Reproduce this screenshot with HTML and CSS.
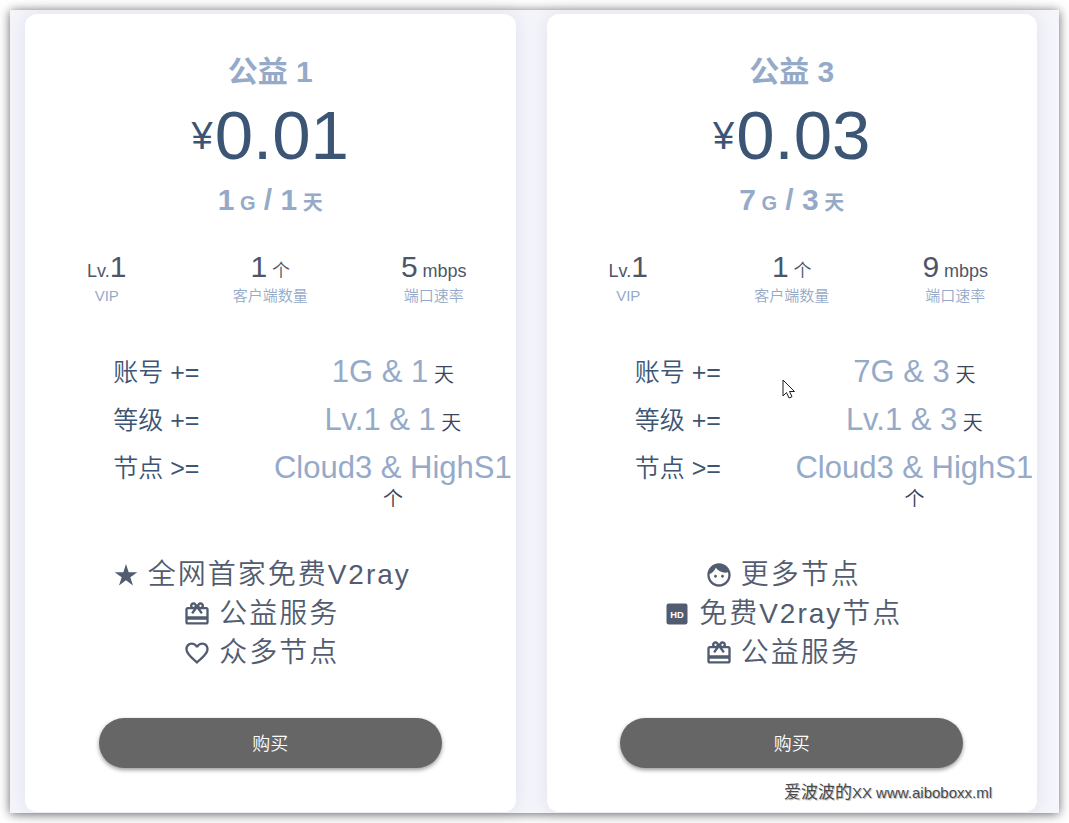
FILE: index.html
```html
<!DOCTYPE html>
<html lang="zh-CN">
<head>
<meta charset="utf-8">
<meta name="viewport" content="width=device-width, initial-scale=1">
<title>套餐</title>
<link rel="stylesheet" href="styles.css">
</head>
<body>
<main class="window">
  <section class="card">
    <h2 class="name">公益 1</h2>
    <p class="price"><span class="currency">¥</span>0.01</p>
    <p class="quota">1<small> G</small> / 1<small> 天</small></p>
    <dl class="stats">
      <div class="stat"><dd><small>Lv.</small>1</dd><dt>VIP</dt></div>
      <div class="stat"><dd>1<small> 个</small></dd><dt>客户端数量</dt></div>
      <div class="stat"><dd>5<small> mbps</small></dd><dt>端口速率</dt></div>
    </dl>
    <dl class="terms">
      <div class="term"><dt>账号 +=</dt><dd>1G &amp; 1<small> 天</small></dd></div>
      <div class="term"><dt>等级 +=</dt><dd>Lv.1 &amp; 1<small> 天</small></dd></div>
      <div class="term"><dt>节点 &gt;=</dt><dd>Cloud3 &amp; HighS1<small> 个</small></dd></div>
    </dl>
    <ul class="features">
      <li><svg class="icon" aria-hidden="true"><use href="#star"/></svg>全网首家免费V2ray</li>
      <li><svg class="icon" aria-hidden="true"><use href="#gift"/></svg>公益服务</li>
      <li><svg class="icon" aria-hidden="true"><use href="#heart"/></svg>众多节点</li>
    </ul>
    <button class="buy" type="button">购买</button>
  </section>
  <section class="card">
    <h2 class="name">公益 3</h2>
    <p class="price"><span class="currency">¥</span>0.03</p>
    <p class="quota">7<small> G</small> / 3<small> 天</small></p>
    <dl class="stats">
      <div class="stat"><dd><small>Lv.</small>1</dd><dt>VIP</dt></div>
      <div class="stat"><dd>1<small> 个</small></dd><dt>客户端数量</dt></div>
      <div class="stat"><dd>9<small> mbps</small></dd><dt>端口速率</dt></div>
    </dl>
    <dl class="terms">
      <div class="term"><dt>账号 +=</dt><dd>7G &amp; 3<small> 天</small></dd></div>
      <div class="term"><dt>等级 +=</dt><dd>Lv.1 &amp; 3<small> 天</small></dd></div>
      <div class="term"><dt>节点 &gt;=</dt><dd>Cloud3 &amp; HighS1<small> 个</small></dd></div>
    </dl>
    <ul class="features">
      <li><svg class="icon" aria-hidden="true"><use href="#face"/></svg>更多节点</li>
      <li><svg class="icon" viewBox="0 0 24 24" aria-hidden="true"><rect x="3" y="3" width="18" height="18" rx="2"/><text class="hd-text" x="12" y="15" text-anchor="middle">HD</text></svg>免费V2ray节点</li>
      <li><svg class="icon" aria-hidden="true"><use href="#gift"/></svg>公益服务</li>
    </ul>
    <button class="buy" type="button">购买</button>
  </section>
  <p class="watermark"><span class="watermark-name">爱波波的</span>XX www.aiboboxx.ml</p>
  <svg class="cursor" viewBox="0 0 13 20" aria-hidden="true"><path d="M1 1v16l3.500-3.500 2.500 5.500 3-1.300-2.500-5.200h5z"/></svg>
</main>
<svg class="sprite" aria-hidden="true">
  <symbol id="star" viewBox="0 0 24 24"><path d="M12 2.500l2.300 7.100h7.400l-6 4.300 2.300 7.100-6-4.400-6 4.400 2.300-7.100-6-4.300h7.400z"/></symbol>
  <symbol id="gift" viewBox="0 0 24 24"><path d="M20 6h-2.180c.11-.31.18-.65.18-1 0-1.660-1.340-3-3-3-1.050 0-1.960.54-2.500 1.350l-.5.67-.5-.68C10.960 2.540 10.050 2 9 2 7.340 2 6 3.340 6 5c0 .35.07.69.18 1H4c-1.110 0-1.990.89-1.990 2L2 19c0 1.110.89 2 2 2h16c1.110 0 2-.89 2-2V8c0-1.110-.89-2-2-2zm-5-2c.55 0 1 .45 1 1s-.45 1-1 1-1-.45-1-1 .45-1 1-1zM9 4c.55 0 1 .45 1 1s-.45 1-1 1-1-.45-1-1 .45-1 1-1zm11 15H4v-2h16v2zm0-5H4V8h5.080L7 10.830 8.620 12 11 8.760l1-1.360 1 1.360L15.380 12 17 10.830 14.920 8H20v6z"/></symbol>
  <symbol id="heart" viewBox="0 0 24 24"><path d="M16.500 3c-1.740 0-3.410.81-4.500 2.090C10.910 3.810 9.240 3 7.500 3 4.420 3 2 5.420 2 8.500c0 3.780 3.400 6.860 8.550 11.540L12 21.350l1.450-1.320C18.600 15.360 22 12.280 22 8.500 22 5.420 19.580 3 16.500 3zm-4.400 15.550l-.1.1-.1-.1C7.140 14.240 4 11.390 4 8.500 4 6.500 5.500 5 7.500 5c1.540 0 3.040.99 3.570 2.360h1.870C13.460 5.990 14.960 5 16.500 5c2 0 3.500 1.500 3.500 3.500 0 2.890-3.140 5.740-7.900 10.050z"/></symbol>
  <symbol id="face" viewBox="0 0 24 24"><path d="M9 11.750c-.69 0-1.250.56-1.250 1.250s.56 1.250 1.250 1.250 1.250-.56 1.250-1.250-.56-1.250-1.250-1.250zm6 0c-.69 0-1.250.56-1.250 1.250s.56 1.250 1.250 1.250 1.250-.56 1.250-1.250-.56-1.250-1.250-1.250zM12 2C6.480 2 2 6.480 2 12s4.480 10 10 10 10-4.480 10-10S17.520 2 12 2zm0 18c-4.410 0-8-3.590-8-8 0-.29.02-.58.05-.86 2.360-1.050 4.230-2.980 5.210-5.370C11.070 8.330 14.050 10 17.420 10c.78 0 1.530-.09 2.250-.26.21.71.33 1.470.33 2.260 0 4.410-3.590 8-8 8z"/></symbol>
</svg>
</body>
</html>
```
FILE: styles.css
```css
* {
  box-sizing: border-box;
}

body {
  margin: 0;
  padding: 10px;
  background: #fff;
  color: #525f7f;
  font-family: "Liberation Sans", "Noto Sans CJK SC", sans-serif;
  font-weight: 350;
}

h2, p, dl, dd, ul {
  margin: 0;
  padding: 0;
}

.sprite {
  position: absolute;
  width: 0;
  height: 0;
}

.window {
  position: relative;
  display: grid;
  grid-template-columns: 1fr 1fr;
  gap: 31px;
  padding: 4px 22px 1px 15px;
  background: #f5f6fc;
  box-shadow: 0 1px 10px rgba(0, 0, 0, 0.6);
}

.card {
  display: flex;
  flex-direction: column;
  align-items: center;
  padding: 38px 0 44px;
  border-radius: 12px;
  background: #fff;
  box-shadow: 0 0 20px rgba(80, 80, 110, 0.13);
}

.name,
.quota {
  color: #95aac9;
  font-size: 30px;
  font-weight: 700;
  line-height: 40px;
}

.quota small {
  font-size: 20px;
  line-height: 20px;
}

.price {
  margin: 4px 0;
  color: #3c5575;
  font-size: 69px;
  line-height: 80px;
}

.currency {
  margin-right: 2px;
  font-size: 38px;
  line-height: 38px;
  vertical-align: 10px;
}

.stats {
  display: grid;
  grid-template-columns: repeat(3, 1fr);
  width: 100%;
  margin-top: 30px;
}

.stat {
  display: flex;
  flex-direction: column;
  align-items: center;
}

.stat dd {
  color: #4d5669;
  font-size: 30px;
  line-height: 34px;
}

.stat small {
  font-size: 18px;
  line-height: 18px;
}

.stat dt {
  color: #95aac9;
  font-size: 15px;
  line-height: 24px;
}

.terms {
  width: 100%;
  margin-top: 40px;
}

.term {
  display: grid;
  grid-template-columns: 50% 50%;
  padding: 10px 0;
}

.term dt {
  padding-left: 36%;
  color: #3c5575;
  font-size: 25px;
  line-height: 28px;
}

.term dd {
  color: #95aac9;
  font-size: 31px;
  line-height: 28px;
  text-align: center;
}

.term small {
  color: #3c4458;
  font-size: 20px;
  line-height: 20px;
}

.features {
  margin-top: 35px;
  padding-right: 18px;
  list-style: none;
  color: #525c70;
  font-size: 28px;
  letter-spacing: 2px;
}

.features li {
  display: flex;
  align-items: center;
  justify-content: center;
  gap: 8px;
  line-height: 39px;
}

.icon {
  width: 28px;
  height: 28px;
  fill: #525c70;
}

.hd-text {
  fill: #fff;
  font: 700 8px "Liberation Sans", sans-serif;
  letter-spacing: 0;
}

.buy {
  width: 70%;
  height: 50px;
  margin-top: 46px;
  padding: 0 0 2px;
  border: 0;
  border-radius: 25px;
  background: #666;
  box-shadow: 0 2px 4px rgba(0, 0, 0, 0.4);
  color: #fff;
  font: inherit;
  font-size: 18px;
}

.watermark {
  position: absolute;
  right: 67px;
  bottom: 9px;
  color: #4a4a4a;
  font-size: 15px;
  font-weight: 400;
  line-height: 22px;
  text-shadow: 1px 1px 0 #c4c4c4;
}

.watermark-name {
  font-size: 17px;
}

.cursor {
  position: absolute;
  top: 369px;
  left: 772px;
  width: 13px;
  height: 20px;
  fill: #fff;
  stroke: #1c1c28;
}
```
